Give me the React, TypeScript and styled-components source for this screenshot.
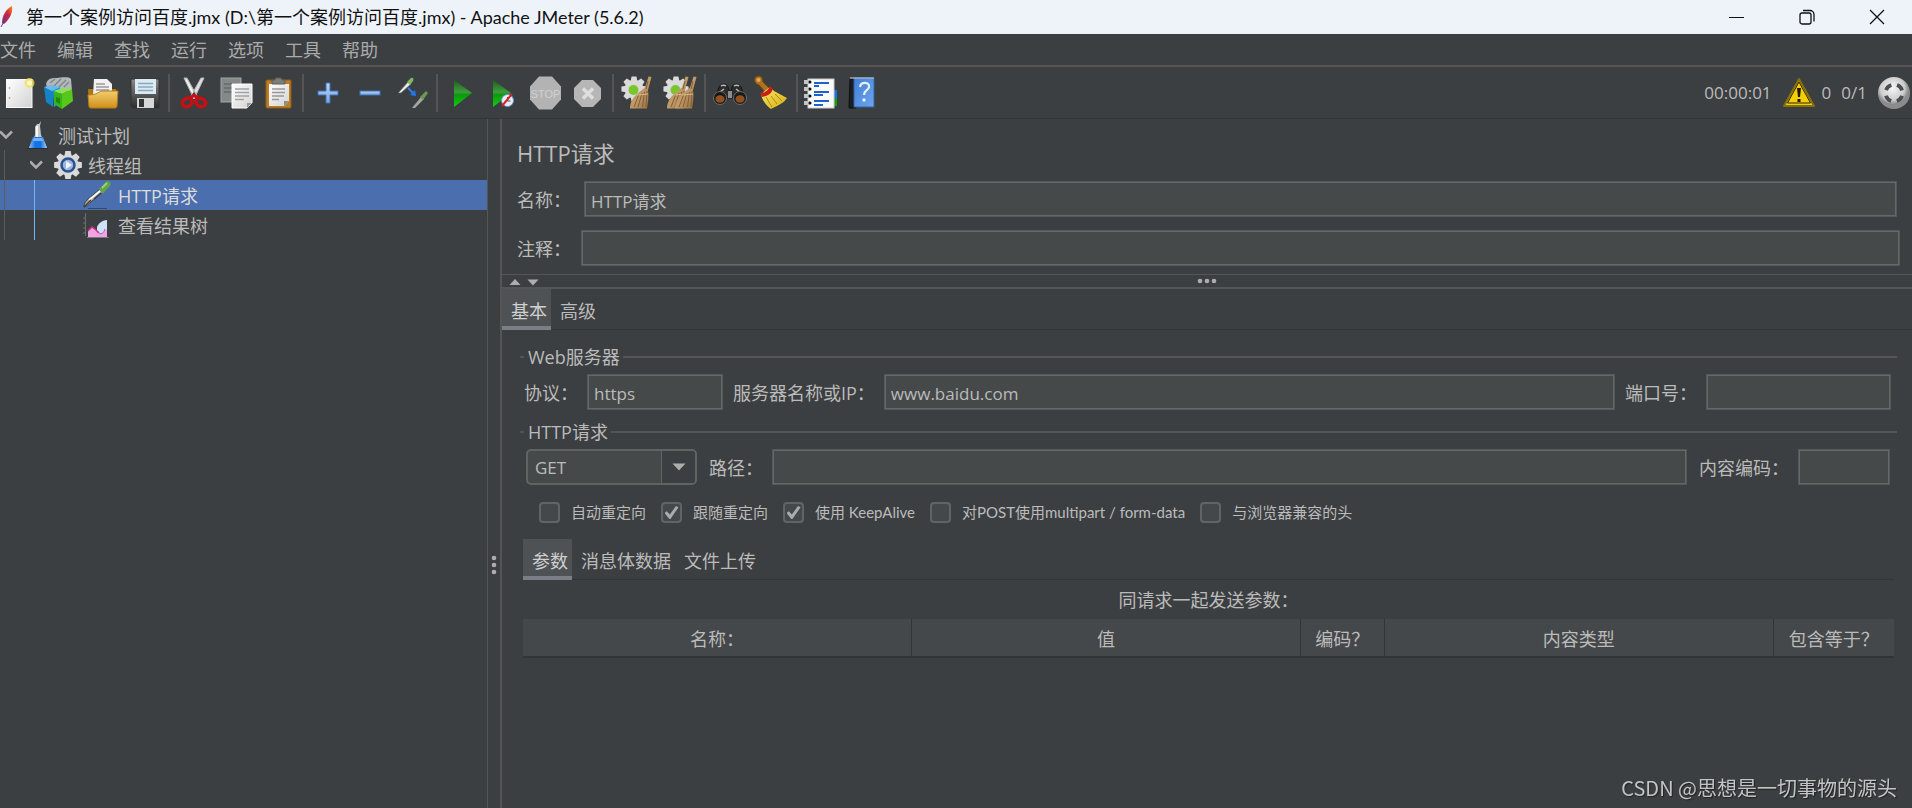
import React from "react";
import styled, { createGlobalStyle } from "styled-components";

const c = {
  bg: "#3c3f41",
  field: "#45494a",
  line: "#555555",
  dark: "#323537",
  text: "#bbbbbb",
  select: "#4b6eaf",
};

const Global = createGlobalStyle`
  *, *::before, *::after { box-sizing: border-box; }
  body { margin: 0; background: ${c.bg}; }
  button, input, select { font: inherit; color: inherit; margin: 0; }
  button { background: none; border: 0; padding: 0; }
  svg { display: block; flex: none; }
`;

const Window = styled.div`
  display: flex;
  flex-direction: column;
  min-height: 100vh;
  overflow-x: hidden;
  background: ${c.bg};
  color: ${c.text};
  font: 18px/24px "Open Sans", "Noto Sans CJK SC", sans-serif;
  white-space: nowrap;
`;

/* Title bar */
const TitleBar = styled.header`
  display: flex;
  align-items: center;
  height: 34px;
  background: #eef3fa;
  color: #111111;
`;
const FeatherSlot = styled.span`
  width: 26px;
  flex: none;
`;
const WindowTitle = styled.span`
  flex: 1;
  font-size: 18px;
  font-family: Lato, "Noto Sans CJK SC", sans-serif;
`;
const WindowButton = styled.button`
  display: grid;
  place-items: center;
  width: 70px;
  height: 34px;
`;

/* Menu and tool bar */
const MenuBar = styled.nav`
  display: flex;
  gap: 21px;
  height: 33px;
  align-items: center;
  border-bottom: 2px solid ${c.line};
`;
const MenuItem = styled.button`
  color: #a9abac;
`;
const ToolBar = styled.div`
  display: flex;
  align-items: center;
  height: 52px;
  margin-left: -3px;
  border-bottom: 1px solid ${c.dark};
`;
const ToolButton = styled.button`
  display: grid;
  place-items: center;
  width: 42px;
  height: 36px;
`;
const ToolSeparator = styled.span`
  width: 2px;
  height: 38px;
  margin: 0 3px;
  background: ${c.line};
`;
const Status = styled.div`
  display: flex;
  align-items: center;
  gap: 10px;
  margin-left: auto;
  padding-right: 1px;
  font-size: 17px;
`;
const Counter = styled.span`
  display: flex;
  align-items: center;
  gap: 6px;
`;

/* Body */
const Body = styled.main`
  display: flex;
  flex: 1;
`;
const TreePanel = styled.aside`
  width: 488px;
  flex: none;
  border-right: 1px solid ${c.line};
  padding-top: 1px;
`;
const TreeList = styled.ul`
  list-style: none;
  margin: 0;
  padding: 0;
`;
const TreeRow = styled.li<{ $selected?: boolean }>`
  display: flex;
  height: 30px;
  align-items: center;
  background: ${(p) => (p.$selected ? c.select : "transparent")};
  color: ${(p) => (p.$selected ? "#dddddd" : c.text)};
`;
const TreeText = styled.span`
  padding-top: 2px;
`;
const Guide = styled.span<{ $active?: boolean }>`
  width: 30px;
  height: 30px;
  flex: none;
  padding-left: 4px;
  &::before {
    content: "";
    display: block;
    width: 1px;
    height: 30px;
    background: ${(p) => (p.$active ? "#6fb8f8" : "#5a5c5e")};
  }
`;
const Twisty = styled.span`
  width: 23px;
  flex: none;
`;
const TreeIcon = styled.span`
  display: grid;
  place-items: center;
  width: 30px;
  margin-right: 5px;
`;

const Divider = styled.div`
  display: flex;
  flex-direction: column;
  align-items: center;
  width: 14px;
  flex: none;
  padding-top: 436px;
  border-right: 2px solid ${c.line};
`;
const Editor = styled.section`
  flex: 1;
  min-width: 0;
`;
const EditorHead = styled.div`
  display: flex;
  flex-direction: column;
  gap: 13px;
  padding: 19px 12px 8px 15px;
`;
const Heading = styled.h1`
  margin: 0;
  font-size: 22px;
  line-height: 30px;
  font-weight: 400;
`;
const Field = styled.div<{ $grow?: boolean; $gap?: number; $right?: number }>`
  display: flex;
  align-items: center;
  flex: ${(p) => (p.$grow ? "1" : "none")};
  gap: ${(p) => p.$gap ?? 9}px;
  padding-right: ${(p) => p.$right ?? 0}px;
`;
const Label = styled.label`
  padding-top: 2px;
`;
const TextBox = styled.input<{ $width?: number }>`
  width: ${(p) => (p.$width ? `${p.$width}px` : "auto")};
  flex: ${(p) => (p.$width ? "none" : "1")};
  min-width: 0;
  height: 36px;
  padding: 2px 6px 0;
  font-size: 17px;
  outline: none;
  border: 1px solid #555758;
  border-radius: 0;
  box-shadow: inset 0 0 0 1px #666868;
  background: ${c.field};
`;

const SplitBar = styled.div`
  display: grid;
  grid-template-columns: 1fr auto 1fr;
  align-items: center;
  height: 15px;
  border-top: 1px solid ${c.line};
  border-bottom: 2px solid ${c.line};
`;
const SplitArrows = styled.span`
  display: flex;
  gap: 6px;
  padding: 2px 0 0 7px;
`;

const Tabs = styled.div`
  display: flex;
  height: 41px;
  box-shadow: inset 0 -1px 0 ${c.dark};
`;
const Tab = styled.button<{ $on?: boolean }>`
  padding: 6px 4px 0 9px;
  border-bottom: 4px solid ${(p) => (p.$on ? "#7a7e87" : "transparent")};
  background: ${(p) => (p.$on ? "#4e5254" : "transparent")};
  color: ${(p) => (p.$on ? "#d0d0d0" : c.text)};
`;
const TabPage = styled.div`
  display: flex;
  flex-direction: column;
  gap: 10px;
  padding: 15px 15px 0 18px;
`;
const Group = styled.fieldset`
  min-width: 0;
  margin: 0;
  padding: 5px 0 0;
  border: 0;
  border-top: 2px solid ${c.line};
`;
const GroupTitle = styled.legend`
  margin-left: 4px;
  padding: 0 3px 0 4px;
`;
const FieldRow = styled.div<{ $inset?: boolean }>`
  display: flex;
  gap: ${(p) => (p.$inset ? 12 : 10)}px;
  padding: ${(p) => (p.$inset ? "0 7px 0 6px" : "0 6px 0 4px")};
`;
const Combo = styled.div`
  display: grid;
  grid-template-columns: 1fr 36px;
  width: 171px;
  height: 36px;
`;
const ComboSelect = styled.select`
  grid-area: 1 / 1 / 2 / 3;
  appearance: none;
  padding: 2px 44px 0 7px;
  font-size: 17px;
  border: 2px solid #616363;
  border-radius: 5px;
  background: ${c.field};
`;
const ComboArrow = styled.span`
  grid-area: 1 / 2;
  display: grid;
  place-items: center;
  z-index: 1;
  margin: 2px 2px 2px 0;
  border-left: 1px solid #646464;
  border-radius: 0 3px 3px 0;
  background: ${c.bg};
  pointer-events: none;
`;
const CheckRow = styled.div`
  display: flex;
  gap: 15px;
  padding: 17px 0 16px 19px;
`;
const CheckLabel = styled.label`
  display: flex;
  align-items: center;
  gap: 11px;
  height: 21px;
  font: 15px/21px Lato, "Noto Sans CJK SC", sans-serif;
`;
const CheckBox = styled.input`
  appearance: none;
  display: grid;
  place-items: center;
  width: 21px;
  height: 21px;
  border: 2px solid #616464;
  border-radius: 4px;
  background: #43494a;
  &:checked::after {
    content: "";
    width: 14px;
    height: 13px;
    background: #a9abac;
    clip-path: polygon(0 54%, 16% 40%, 38% 66%, 82% 0, 100% 10%, 42% 100%, 34% 100%);
  }
`;
const SubPage = styled.div`
  padding: 0 3px;
`;
const Params = styled.table`
  width: 100%;
  table-layout: fixed;
  border-collapse: collapse;
`;
const ParamsCaption = styled.caption`
  height: 39px;
  line-height: 41px;
`;
const Column = styled.col<{ $width?: number }>`
  width: ${(p) => (p.$width ? `${p.$width}px` : "auto")};
`;
const HeadCell = styled.th`
  height: 38px;
  padding: 2px 0 0;
  font-weight: 400;
  text-align: center;
  background: #45484a;
  border-bottom: 2px solid ${c.dark};
  & + & {
    border-left: 1px solid ${c.dark};
  }
`;
const Watermark = styled.div`
  position: fixed;
  right: 15px;
  bottom: 6px;
  font: 20px/28px "Noto Sans CJK SC", sans-serif;
  color: #c3c4c5;
  text-shadow: 1px 1px 1px #202223;
`;

/* Drawings */
const Ic = ({ children, size = 36, box = 36 }: { children: React.ReactNode; size?: number; box?: number }) => (
  <svg width={size} height={size} viewBox={`0 0 ${box} ${box}`} aria-hidden="true">
    {children}
  </svg>
);

const HiddenSvg = styled.svg`
  position: absolute;
`;
const Defs = () => (
  <HiddenSvg width="0" height="0" aria-hidden="true">
    <defs>
      <linearGradient id="paper" x2="1" y2="1"><stop stopColor="#ffffff" /><stop offset="1" stopColor="#d2d2d2" /></linearGradient>
      <linearGradient id="gold" x2="0" y2="1"><stop stopColor="#f2cd72" /><stop offset="1" stopColor="#cf8f16" /></linearGradient>
      <linearGradient id="green" x2="0" y2="1"><stop stopColor="#1c5f1c" /><stop offset=".45" stopColor="#3f9b3f" /><stop offset=".55" stopColor="#0a9a0a" /><stop offset="1" stopColor="#12d012" /></linearGradient>
      <linearGradient id="steel" x2="0" y2="1"><stop stopColor="#8a8a8a" /><stop offset="1" stopColor="#2b2b2b" /></linearGradient>
      <linearGradient id="plus" x2="0" y2="1"><stop stopColor="#b9d4f3" /><stop offset="1" stopColor="#7aa6de" /></linearGradient>
      <linearGradient id="straw" x2="1" y2="1"><stop stopColor="#a58a66" /><stop offset=".5" stopColor="#c19a68" /><stop offset="1" stopColor="#8f6a3e" /></linearGradient>
      <linearGradient id="yellow" x2="1" y2="1"><stop stopColor="#fbe96a" /><stop offset="1" stopColor="#d6ab10" /></linearGradient>
      <linearGradient id="book" x2="1" y2="1"><stop stopColor="#3f7fd6" /><stop offset="1" stopColor="#6ea6ee" /></linearGradient>
      <linearGradient id="liquid" x2="1" y2="0"><stop stopColor="#8dbdf5" /><stop offset=".35" stopColor="#1273e6" /><stop offset=".65" stopColor="#1273e6" /><stop offset="1" stopColor="#a9cdf8" /></linearGradient>
      <radialGradient id="ball" cx=".45" cy=".35"><stop stopColor="#f6f6f6" /><stop offset=".75" stopColor="#cccccc" /><stop offset="1" stopColor="#8b8b8b" /></radialGradient>
      <linearGradient id="feather" x1="1" y1="0" x2="0" y2="1"><stop stopColor="#f39a1d" /><stop offset=".4" stopColor="#d8263d" /><stop offset="1" stopColor="#7c2a7e" /></linearGradient>
    </defs>
  </HiddenSvg>
);

const Cog = ({ x = 0, y = 0, r = 1 }: { x?: number; y?: number; r?: number }) => (
  <g transform={`translate(${x} ${y}) scale(${r})`} fill="#dadada">
    {[0, 45, 90, 135, 180, 225, 270, 315].map((a) => (
      <path key={a} transform={`rotate(${a})`} d="M-2.6-13.5h5.2l1 5h-7.2z" />
    ))}
    <circle r="10" />
  </g>
);

const Broom = ({ x = 0 }: { x?: number }) => (
  <g transform={`translate(${x} 0)`}>
    <path d="M28.500 1.500l3 .5-3.500 13c1 6 0 12-1 18.500H10c0-6 3-12 10-17l5-4z" fill="url(#straw)" />
    <path d="M19 19l-5 13M22 18l-4 14M24.500 17l-2 15M27 16l-1 16M28 6l-2 8" stroke="#7b5a31" strokeWidth=".9" fill="none" />
    <path d="M17 20l11-1" stroke="#d8bb8e" strokeWidth="1.200" />
  </g>
);

const Pipette = () => (
  <>
    <path d="M1 27c0-3 1-5 3-7L17 9l3 3L8 22c-2 2-4 4-7 5z" fill="#a4a8a4" stroke="#43483f" strokeWidth="1" />
    <path d="M6 20L17 11" stroke="#f6f6f6" strokeWidth="1.800" />
    <path d="M1 27l7-7M11 19l7-6" stroke="#3c3c3c" strokeWidth="1.300" />
    <path d="M16 9l2-2 5-5c2-2 6 0 4 4l-5 5-2 3z" fill="#62a544" />
    <path d="M19 8l5-5" stroke="#9bd079" strokeWidth="2" />
    <path d="M5 28.500h19" stroke="#34486e" />
  </>
);

const icons = {
  create: <Ic>
    <rect x="6.500" y="4.500" width="25.500" height="28" fill="url(#paper)" stroke="#f8f8f8" />
    <path d="M9.500 12v2M9.500 22v2" stroke="#b2b2b2" strokeWidth="1.500" />
    <circle cx="29.500" cy="8" r="5" fill="#f1e05a" opacity=".75" /><circle cx="29.500" cy="8" r="2.500" fill="#fff8c4" />
  </Ic>,
  templates: <Ic>
    <path d="M4 9c2-7 8-6 11-6s11-2 14 1l1 12H6z" fill="#b2b8bb" /><path d="M8 8l5-4M12 11l7-7M17 12l7-7M22 12l5-5" stroke="#7e8688" strokeWidth="1.500" />
    <path d="M2 12l9 3v17l-7-5z" fill="#1583c8" /><path d="M11 14l7-3v17l-6 4z" fill="#1f9fe6" /><path d="M2 12l7-2 9 2-8 4z" fill="#6bb9e8" />
    <path d="M12 16l8 3v15l-8-5z" fill="#36b51b" /><path d="M20 19l10-5 1 12-11 8z" fill="#57c81a" /><path d="M12 16l9-3 9 1-10 5z" fill="#8fe04e" />
    <path d="M14 22l4 1v6l-4-2z" fill="#1f8a10" />
  </Ic>,
  open: <Ic>
    <path d="M4 14h28v19H5z" fill="#b1750f" /><path d="M10 4h13l5 5v12H9z" fill="#f1f1f1" /><path d="M12 9h9M12 12h13M12 15h13" stroke="#9a9a9a" strokeWidth="1.500" />
    <path d="M4 20c9 0 10-3 14-4h16l-1 15c0 1-1 2-2 2H7c-1 0-2-1-2-2z" fill="url(#gold)" stroke="#b67d18" />
  </Ic>,
  save: <Ic>
    <path d="M5 4h28v29H7l-2-2z" fill="url(#steel)" stroke="#333" /><path d="M9 4h21v15H9z" fill="#dbeaf2" /><path d="M12 8.500h15M12 12h15M12 15.500h15" stroke="#8aa9bd" strokeWidth="1.500" />
    <rect x="11" y="23" width="17" height="10" fill="#d6d6d6" /><rect x="13" y="24" width="5" height="8" fill="#353535" />
  </Ic>,
  cut: <Ic>
    <path d="M8 3l3 0 10 18-3 3zM28 3l-3 0-10 18 3 3z" fill="#dedfe0" stroke="#b5b5b5" strokeWidth="1" /><path d="M10 5l7 13" stroke="#fff" />
    <g fill="none" stroke="#c80f14" strokeWidth="3.500"><ellipse cx="11" cy="27.500" rx="5" ry="4" transform="rotate(-25 11 27)" /><ellipse cx="25" cy="27.500" rx="5" ry="4" transform="rotate(25 25 27)" /></g>
    <path d="M14 23l4-3 4 3" stroke="#c80f14" strokeWidth="3" fill="none" />
  </Ic>,
  copy: <Ic>
    <rect x="3" y="3" width="20" height="24" fill="#858889" stroke="#a2a4a5" /><path d="M6 9h14M6 13h10M6 17h10" stroke="#666a6b" strokeWidth="1.500" />
    <path d="M14 9h20v19l-5 5H14z" fill="url(#paper)" stroke="#fff" /><path d="M17 14h14M17 17.500h14M17 21h14M17 24.500h9" stroke="#a2a2a2" strokeWidth="1.500" /><path d="M29 33v-5h5z" fill="#9a9a9a" />
  </Ic>,
  paste: <Ic>
    <rect x="6" y="5" width="25" height="28" rx="1" fill="#bd7d25" stroke="#8f5c16" /><path d="M9 9h20v17l-5 5H9z" fill="url(#paper)" />
    <path d="M12 14h13M12 17.500h13M12 21h12M12 24.500h7" stroke="#999" strokeWidth="1.500" /><path d="M24 31v-5h5z" fill="#8c8c8c" /><path d="M12 9V5h3l1-2h5l1 2h3v4z" fill="#7c7e78" stroke="#5c5e59" />
  </Ic>,
  expand: <Ic><path d="M16 8h4v8h8v4h-8v8h-4v-8H8v-4h8z" fill="url(#plus)" stroke="#3f73bb" /></Ic>,
  collapse: <Ic><rect x="8" y="16" width="20" height="4" fill="url(#plus)" stroke="#3f73bb" /></Ic>,
  toggle: <Ic>
    <path d="M4 18L14 7l3 2L7 18z" fill="#ececec" stroke="#5c5e5c" strokeWidth=".8" /><path d="M13 7l4-4c2-1 3 1 2 3l-3 4z" fill="#7fba5f" />
    <path d="M14 13l6 6" stroke="#2f7fe8" strokeWidth="2" /><path d="M22 21l-6-1 5-5z" fill="#1e78f0" />
    <path d="M18 33l9-11 3 2-9 9z" fill="#a4a6a4" /><path d="M26 22l6-6 2 2-5 7z" fill="#659a50" />
  </Ic>,
  start: <Ic><path d="M10 5l18 13-18 14z" fill="url(#green)" /></Ic>,
  startNoPause: <Ic>
    <path d="M7 5l18 13L7 32z" fill="url(#green)" /><circle cx="21.500" cy="25.500" r="6" fill="#e6edf7" stroke="#6a94cc" /><path d="M21.500 22v4h3" stroke="#456" fill="none" /><path d="M16 31l10-12" stroke="#d52323" strokeWidth="2" />
  </Ic>,
  stop: <Ic>
    <path d="M11 1.500h13l9 10v13l-9 10H11l-9-10v-13z" fill="#b3b3b3" />
    <text x="17.500" y="22.500" textAnchor="middle" fontFamily="Liberation Sans, sans-serif" fontSize="11" fill="#d0d0d0">STOP</text>
  </Ic>,
  shutdown: <Ic>
    <path d="M12 5h11l8 8v11l-8 8H12l-8-8V13z" fill="#b6b6b6" /><path d="M13 13.500l10 10M23 13.500l-10 10" stroke="#dedede" strokeWidth="3.500" />
  </Ic>,
  clear: <Ic><Cog x={14} y={14} r={0.93} /><circle cx="13.500" cy="15" r="5" fill="#79c62c" /><Broom /></Ic>,
  clearAll: <Ic><Cog x={14} y={14} r={0.93} /><circle cx="13.500" cy="15" r="5" fill="#79c62c" /><Broom x={-5} /><Broom x={3} /></Ic>,
  search: <Ic>
    <path d="M7 12c2-4 8-4 9 0l1 4h2l1-4c1-4 7-4 9 0l4 11H3z" fill="#2b2c2d" stroke="#161616" /><path d="M9 11c1-1 4-1 5 0M22 11c1-1 4-1 5 0M8 17l4-3M28 17l-4-3" stroke="#b9b9b9" strokeWidth="1.500" fill="none" />
    <circle cx="8" cy="23" r="6.500" fill="#191919" stroke="#6b6e70" /><circle cx="28" cy="23" r="6.500" fill="#191919" stroke="#6b6e70" />
    <ellipse cx="8" cy="24" rx="4.500" ry="3.800" fill="#94501f" /><ellipse cx="28" cy="24" rx="4.500" ry="3.800" fill="#94501f" /><path d="M16 16h4v7h-4z" fill="#8b8d8f" />
  </Ic>,
  resetSearch: <Ic>
    <path d="M1 3c1-2 6-3 7 0l1 4 7 7-4 4-7-8C1 9 0 6 1 3z" fill="#ae7021" stroke="#704612" /><circle cx="4.500" cy="5" r="2" fill="#e0aa58" />
    <path d="M16 12l4 4 13 7c-3 5-10 8-16 11C12 30 8 25 7 19z" fill="url(#yellow)" /><path d="M12 22l6 10M17 21l6 8M21 19l7 7" stroke="#b08c0e" strokeWidth="1" /><path d="M6 18c5 0 8-2 10-7l3 3c-2 5-5 7-11 8z" fill="#cc1d14" />
  </Ic>,
  functions: <Ic>
    <rect x="25" y="15" width="8" height="8" fill="#1f6fe6" /><rect x="25" y="23" width="8" height="8" fill="#189b18" /><rect x="4" y="4" width="26" height="29" fill="#fafafa" stroke="#ccc" />
    <path d="M10 8h15M10 17h15M10 20h9M10 26h15M10 30h9M10 11h5" stroke="#1d62c9" strokeWidth="2" />
    {[7, 14, 21, 28].map((y) => <g key={y}><rect x="0" y={y - 2} width="6" height="4" fill="#c4c4c4" /><circle cx="6" cy={y} r="1.500" fill="#111" /></g>)}
  </Ic>,
  help: <Ic>
    <path d="M4 4h6v29H3z" fill="#1b1e22" stroke="#0d0f11" /><rect x="8" y="3" width="20" height="29" fill="url(#book)" stroke="#3162a4" /><path d="M4 3h24" stroke="#d4dbe3" />
    <path d="M14 12c1-6 10-5 9 0-1 4-5 3-5 8" stroke="#e8f0fa" strokeWidth="2.200" fill="none" /><circle cx="18" cy="25" r="1.700" fill="#e8f0fa" />
  </Ic>,
};

const toolGroups: [string, React.ReactNode][][] = [
  [["新建", icons.create], ["模板", icons.templates], ["打开", icons.open], ["保存", icons.save]],
  [["剪切", icons.cut], ["复制", icons.copy], ["粘贴", icons.paste]],
  [["展开", icons.expand], ["折叠", icons.collapse], ["切换", icons.toggle]],
  [["启动", icons.start], ["不停顿启动", icons.startNoPause], ["停止", icons.stop], ["关闭", icons.shutdown]],
  [["清除", icons.clear], ["清除全部", icons.clearAll]],
  [["搜索", icons.search], ["重置搜索", icons.resetSearch]],
  [["函数助手", icons.functions], ["帮助", icons.help]],
];

const Warning = () => (
  <svg width="34" height="30" viewBox="0 0 34 30" aria-hidden="true">
    <path d="M17 1l15 27H2z" fill="#f5cd05" stroke="#82700e" strokeWidth="2" strokeLinejoin="round" />
    <path d="M17 4l11.500 21h-23z" fill="none" stroke="#2c2600" strokeWidth="1" />
    <path d="M15 10h4l-1 9h-2z" fill="#1b1700" /><rect x="15.500" y="21" width="3" height="3" fill="#1b1700" />
  </svg>
);
const Running = () => (
  <Ic size={34}>
    <circle cx="18" cy="18" r="17" fill="url(#ball)" />
    <circle cx="18" cy="18" r="9" fill="none" stroke="#4b4e50" strokeWidth="4" strokeDasharray="8 6.137" strokeDashoffset="-3" />
  </Ic>
);
const Chevron = () => (
  <svg width="15" height="12" viewBox="0 0 15 12" aria-hidden="true"><path d="M0 2.500l6 6 6-6" fill="none" stroke="#adadad" strokeWidth="2.500" /></svg>
);
const Flask = () => (
  <Ic size={30} box={30}>
    <path d="M12 7l2-3 2 0 2-3-1 5 1 9 6 13H6l6-13z" fill="#c4c7ca" /><path d="M14 6v11" stroke="#f8f8f8" strokeWidth="2" />
    <path d="M10 17h10l4 11H6z" fill="url(#liquid)" /><path d="M11 18h8l1 3H10z" fill="#b9d8fa" opacity=".6" /><path d="M4 28.500h21" stroke="#292b2c" />
  </Ic>
);
const ThreadCog = () => (
  <Ic size={30} box={30}>
    <Cog x={15} y={15} r={1.03} />
    <circle cx="15" cy="15" r="6.500" fill="#9db5da" stroke="#2c5192" strokeWidth="2.500" /><path d="M13 11l6 4-6 4z" fill="#eef4ff" />
  </Ic>
);
const Results = () => (
  <Ic size={30} box={30}>
    <path d="M2.500 3v23M0 8h2M0 13h2M0 18h2M0 23h2" stroke="#6c6f71" /><path d="M14 17c1-3 5-7 10-7v17H14z" fill="#cfe2f8" />
    <path d="M5 27V21l4-4 4 3 3 4 4-1 4-4v8z" fill="#f3a2e2" /><path d="M5 21l4-4 4 3 3 3" stroke="#c4357e" strokeWidth="1.500" fill="none" /><path d="M16 23c2 2 5 0 6-4" stroke="#b04fae" fill="none" /><path d="M4 27.500h22" stroke="#77797a" />
  </Ic>
);
const Dots = ({ vertical }: { vertical?: boolean }) => (
  <svg width={vertical ? 6 : 20} height={vertical ? 20 : 6} viewBox={vertical ? "0 0 6 20" : "0 0 20 6"} aria-hidden="true">
    {[3, 10, 17].map((p) => <circle key={p} cx={vertical ? 3 : p} cy={vertical ? p : 3} r="2.300" fill="#adadad" />)}
  </svg>
);

const checks: [string, boolean][] = [
  ["自动重定向", false],
  ["跟随重定向", true],
  ["使用 KeepAlive", true],
  ["对POST使用multipart / form-data", false],
  ["与浏览器兼容的头", false],
];

export default function App() {
  return (
    <Window>
      <Global />
      <Defs />
      <TitleBar>
        <FeatherSlot>
          <svg width="16" height="26" viewBox="0 0 16 26" aria-hidden="true">
            <path d="M12 2c1 5-1 12-8 18l-2-1C2 12 6 5 12 2z" fill="url(#feather)" /><path d="M8 10L1 23" stroke="#6a3a80" strokeWidth="1" />
          </svg>
        </FeatherSlot>
        <WindowTitle>{"第一个案例访问百度.jmx (D:\\第一个案例访问百度.jmx) - Apache JMeter (5.6.2)"}</WindowTitle>
        <WindowButton aria-label="最小化">
          <svg width="16" height="16" viewBox="0 0 16 16"><path d="M0 8.500h15" stroke="#111" /></svg>
        </WindowButton>
        <WindowButton aria-label="还原">
          <svg width="16" height="16" viewBox="0 0 16 16" fill="none" stroke="#111" strokeWidth="1.300"><rect x="1" y="4" width="11" height="11" rx="2" /><path d="M4 1.500h7a4 4 0 0 1 4 4v7" /></svg>
        </WindowButton>
        <WindowButton aria-label="关闭">
          <svg width="16" height="16" viewBox="0 0 16 16"><path d="M1 1l14 14M15 1L1 15" stroke="#111" strokeWidth="1.300" /></svg>
        </WindowButton>
      </TitleBar>
      <MenuBar>
        {["文件", "编辑", "查找", "运行", "选项", "工具", "帮助"].map((m) => <MenuItem key={m}>{m}</MenuItem>)}
      </MenuBar>
      <ToolBar>
        {toolGroups.map((group, i) => (
          <React.Fragment key={i}>
            {i > 0 && <ToolSeparator />}
            {group.map(([name, icon]) => <ToolButton key={name} aria-label={name}>{icon}</ToolButton>)}
          </React.Fragment>
        ))}
        <Status>
          <span>00:00:01</span>
          <Counter><Warning />0</Counter>
          <span>0/1</span>
          <Running />
        </Status>
      </ToolBar>
      <Body>
        <TreePanel>
          <TreeList>
            <TreeRow><Twisty><Chevron /></Twisty><TreeIcon><Flask /></TreeIcon><TreeText>测试计划</TreeText></TreeRow>
            <TreeRow><Guide /><Twisty><Chevron /></Twisty><TreeIcon><ThreadCog /></TreeIcon><TreeText>线程组</TreeText></TreeRow>
            <TreeRow $selected><Guide /><Guide $active /><Twisty /><TreeIcon><Ic size={30} box={30}><Pipette /></Ic></TreeIcon><TreeText>HTTP请求</TreeText></TreeRow>
            <TreeRow><Guide /><Guide $active /><Twisty /><TreeIcon><Results /></TreeIcon><TreeText>查看结果树</TreeText></TreeRow>
          </TreeList>
        </TreePanel>
        <Divider><Dots vertical /></Divider>
        <Editor>
          <EditorHead>
            <Heading>HTTP请求</Heading>
            <Field $gap={13} $right={3}>
              <Label htmlFor="name">名称：</Label>
              <TextBox id="name" defaultValue="HTTP请求" />
            </Field>
            <Field $gap={10}>
              <Label htmlFor="comment">注释：</Label>
              <TextBox id="comment" />
            </Field>
          </EditorHead>
          <SplitBar>
            <SplitArrows>
              <svg width="12" height="8" viewBox="0 0 12 8" aria-hidden="true"><path d="M6 1l5.500 6H.5z" fill="#adadad" /></svg>
              <svg width="12" height="8" viewBox="0 0 12 8" aria-hidden="true"><path d="M6 7.500L.5 1.500h11z" fill="#adadad" /></svg>
            </SplitArrows>
            <Dots />
          </SplitBar>
          <Tabs role="tablist">
            <Tab role="tab" aria-selected $on>基本</Tab>
            <Tab role="tab">高级</Tab>
          </Tabs>
          <TabPage>
            <Group>
              <GroupTitle>Web服务器</GroupTitle>
              <FieldRow>
                <Field>
                  <Label htmlFor="protocol">协议：</Label>
                  <TextBox id="protocol" $width={136} defaultValue="https" />
                </Field>
                <Field $grow>
                  <Label htmlFor="server">服务器名称或IP：</Label>
                  <TextBox id="server" defaultValue="www.baidu.com" />
                </Field>
                <Field>
                  <Label htmlFor="port">端口号：</Label>
                  <TextBox id="port" $width={185} />
                </Field>
              </FieldRow>
            </Group>
            <Group>
              <GroupTitle>HTTP请求</GroupTitle>
              <FieldRow $inset>
                <Combo>
                  <ComboSelect aria-label="方法" defaultValue="GET"><option>GET</option><option>POST</option></ComboSelect>
                  <ComboArrow><svg width="14" height="8" viewBox="0 0 14 8" aria-hidden="true"><path d="M.5.5h13L7 7.500z" fill="#adadad" /></svg></ComboArrow>
                </Combo>
                <Field $grow>
                  <Label htmlFor="path">路径：</Label>
                  <TextBox id="path" />
                </Field>
                <Field>
                  <Label htmlFor="encoding">内容编码：</Label>
                  <TextBox id="encoding" $width={92} />
                </Field>
              </FieldRow>
              <CheckRow>
                {checks.map(([label, on]) => (
                  <CheckLabel key={label}><CheckBox type="checkbox" defaultChecked={on} />{label}</CheckLabel>
                ))}
              </CheckRow>
              <SubPage>
                <Tabs role="tablist">
                  <Tab role="tab" aria-selected $on>参数</Tab>
                  <Tab role="tab">消息体数据</Tab>
                  <Tab role="tab">文件上传</Tab>
                </Tabs>
                <Params>
                  <ParamsCaption>同请求一起发送参数：</ParamsCaption>
                  <colgroup><Column /><Column /><Column $width={84} /><Column /><Column $width={121} /></colgroup>
                  <thead>
                    <tr>
                      {["名称：", "值", "编码？", "内容类型", "包含等于？"].map((h) => <HeadCell key={h} scope="col">{h}</HeadCell>)}
                    </tr>
                  </thead>
                </Params>
              </SubPage>
            </Group>
          </TabPage>
        </Editor>
      </Body>
      <Watermark>CSDN @思想是一切事物的源头</Watermark>
    </Window>
  );
}
